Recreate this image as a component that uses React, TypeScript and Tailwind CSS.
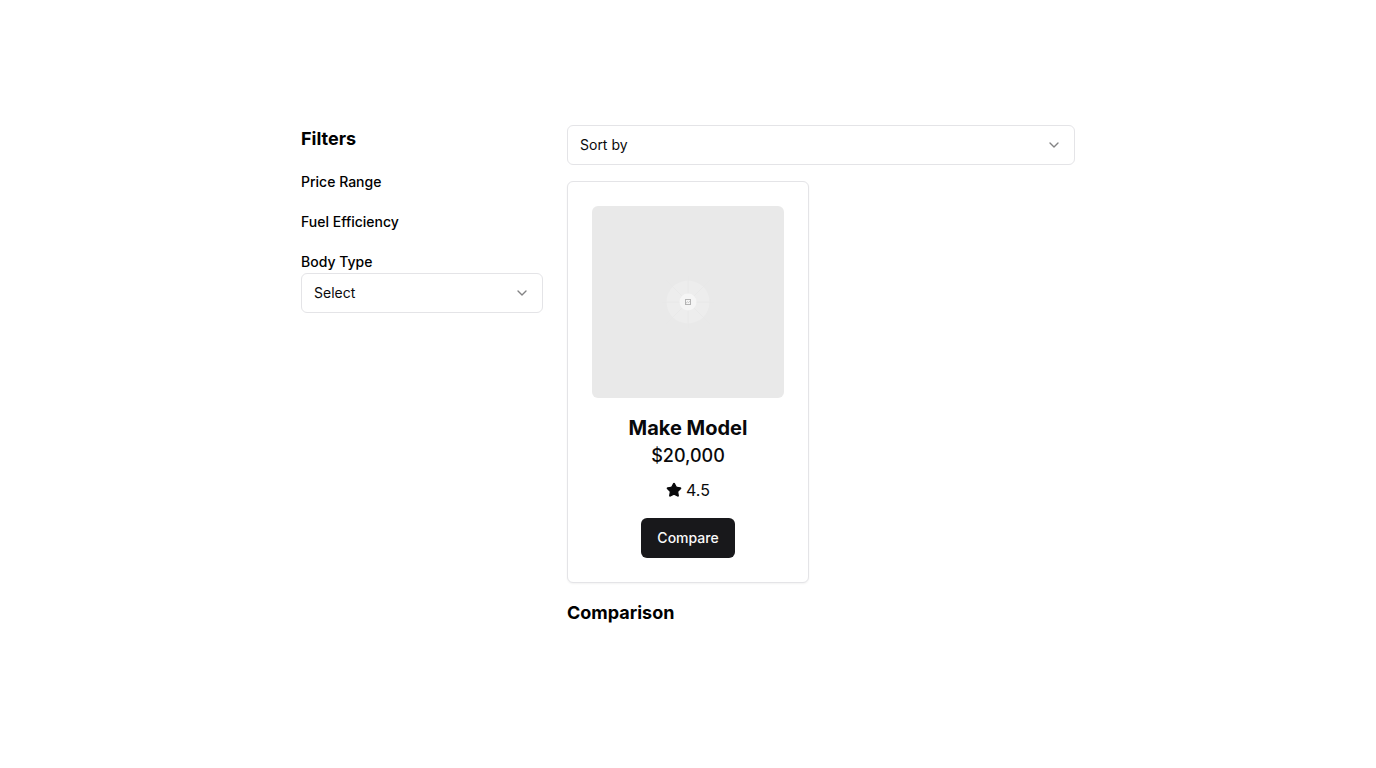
import { ChevronDown, Star } from "lucide-react";

type SelectBoxProps = {
  id: string;
  placeholder: string;
  options: string[];
  label?: string;
};

function SelectBox({ id, placeholder, options, label }: SelectBoxProps) {
  return (
    <div className="grid items-center">
      <select
        id={id}
        aria-label={label}
        defaultValue=""
        className="col-start-1 row-start-1 h-10 w-full appearance-none rounded-md border border-zinc-200 bg-white px-3 text-sm text-zinc-950"
      >
        <option value="">{placeholder}</option>
        {options.map((option) => (
          <option key={option}>{option}</option>
        ))}
      </select>
      <ChevronDown
        aria-hidden="true"
        className="pointer-events-none col-start-1 row-start-1 mr-[13px] size-4 justify-self-end text-zinc-950 opacity-50"
      />
    </div>
  );
}

function PlaceholderImage() {
  return (
    <svg
      viewBox="0 0 192 192"
      role="img"
      aria-label="Car"
      className="aspect-square w-full rounded-md bg-[#e9e9e9]"
    >
      <circle cx="96" cy="96" r="21.5" fill="#ededed" />
      <g stroke="#e7e7e7" strokeWidth="0.8">
        <path d="M70 96h52M96 70v52" />
        <path d="M74 74l44 44M118 74l-44 44" />
      </g>
      <circle cx="96" cy="96" r="8.5" fill="#f5f5f5" />
      <g fill="none" stroke="#b4b4b4" strokeWidth="1">
        <rect x="93.5" y="93.5" width="5" height="5" />
        <path d="M94 97.2l1.6-1.4 1 .8 1.6-1.6" strokeWidth="0.7" />
      </g>
    </svg>
  );
}

function CarCard() {
  return (
    <article className="flex flex-col items-center rounded-md border border-zinc-200 bg-white p-6 text-zinc-950 shadow-xs">
      <PlaceholderImage />
      <h3 className="mt-4 text-xl font-bold">Make Model</h3>
      <p className="text-lg font-medium">$20,000</p>
      <div className="mt-2 flex items-center gap-1">
        <Star aria-hidden="true" className="size-4 fill-current" />
        <span>4.5</span>
      </div>
      <button
        type="button"
        className="mt-4 h-10 rounded-md bg-zinc-900 px-4 text-sm font-medium text-zinc-50"
      >
        Compare
      </button>
    </article>
  );
}

export default function App() {
  return (
    <div className="flex min-h-screen items-center justify-center bg-white font-[Inter,sans-serif] text-black">
      <main className="grid w-full max-w-[774px] grid-cols-3 gap-6">
        <aside>
          <h2 className="mb-4 text-lg font-bold">Filters</h2>
          <div className="flex flex-col gap-4">
            <div>
              <span className="text-sm font-medium">Price Range</span>
            </div>
            <div>
              <span className="text-sm font-medium">Fuel Efficiency</span>
            </div>
            <div>
              <label htmlFor="body-type" className="text-sm font-medium">
                Body Type
              </label>
              <SelectBox
                id="body-type"
                placeholder="Select"
                options={["Sedan", "SUV", "Truck"]}
              />
            </div>
          </div>
        </aside>
        <div className="col-span-2 flex flex-col gap-4">
          <SelectBox
            id="sort-by"
            label="Sort by"
            placeholder="Sort by"
            options={["Price", "Fuel Efficiency", "Rating"]}
          />
          <div className="grid grid-cols-2 gap-6">
            <CarCard />
          </div>
          <section>
            <h2 className="mb-4 text-lg font-bold">Comparison</h2>
          </section>
        </div>
      </main>
    </div>
  );
}
